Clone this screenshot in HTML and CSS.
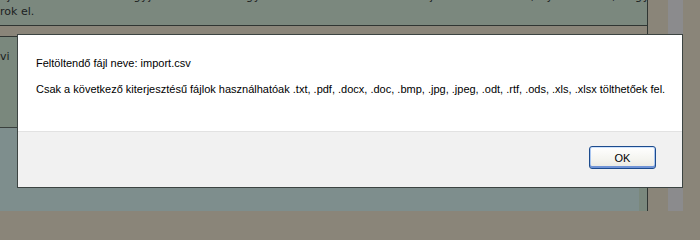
FILE: index.html
```html
<!DOCTYPE html>
<html lang="hu">
<head>
<meta charset="utf-8">
<title>Feltöltés</title>
<link rel="stylesheet" href="styles.css">
</head>
<body>
<div class="page">
  <div class="main">
    <div class="panel-top">
      <p class="bg-text first">ejtőre feltöltheted. Vagyjon kötelezettvagy önkéntes hozzászólásról sajátos feltételeire, nyilatkozom, hogy a</p>
      <p class="bg-text">rok el.</p>
    </div>
    <div class="band"></div>
    <div class="panel-mid">
      <div class="mid-inner">
        <p class="bg-text vi">vi</p>
      </div>
      <div class="mid-lower"></div>
    </div>
  </div>
  <div class="gutter"></div>
  <div class="stripe"></div>
  <div class="edge"></div>
</div>

<div class="dialog" role="dialog">
  <div class="dialog-body">
    <p>Feltöltendő fájl neve: import.csv</p>
    <p>Csak a következő kiterjesztésű fájlok használhatóak .txt, .pdf, .docx, .doc, .bmp, .jpg, .jpeg, .odt, .rtf, .ods, .xls, .xlsx tölthetőek fel.</p>
  </div>
  <div class="dialog-footer">
    <button class="ok-btn" type="button">OK</button>
  </div>
</div>
</body>
</html>
```

FILE: styles.css
```css
html, body {
  margin: 0;
  padding: 0;
}
body {
  width: 700px;
  height: 211px;
  overflow: hidden;
  background: #8a8579;
  position: relative;
  font-family: "Liberation Sans", Arial, sans-serif;
}
.page {
  display: flex;
  height: 211px;
}
.main {
  width: 647px;
  border-right: 1px solid #2f3532;
  display: flex;
  flex-direction: column;
}
.gutter {
  width: 20px;
  background: #8a8579;
}
.stripe {
  width: 15px;
  background: #8b8b8d;
}
.edge {
  flex: 1;
  background: #8a8579;
}
.panel-top {
  height: 25px;
  background: #7b887e;
  border-bottom: 1px solid #2f3532;
  overflow: hidden;
}
.bg-text {
  margin: 0;
  font-family: "DejaVu Sans", Verdana, sans-serif;
  font-size: 11px;
  line-height: 14px;
  color: #1b211e;
  white-space: nowrap;
}
.bg-text.first {
  margin-top: -10px;
  margin-bottom: 1px;
  letter-spacing: 0.6px;
}
.band {
  height: 10px;
  background: #8a8579;
}
.panel-mid {
  flex: 1;
  border-top: 1px solid #2f3532;
  background: #7a887d;
  display: flex;
  flex-direction: column;
}
.mid-inner {
  height: 90px;
  border-bottom: 1px solid #3a403d;
}
.vi {
  padding-top: 13px;
  padding-left: 0;
}
.mid-lower {
  flex: 1;
  width: 639px;
  background: #7e8e8d;
}

.dialog {
  position: absolute;
  left: 17px;
  top: 34px;
  width: 664px;
  height: 152px;
  border: 1px solid #3c4442;
  background: #ffffff;
  display: flex;
  flex-direction: column;
}
.dialog-body {
  height: 96px;
  padding: 21px 18px 0 18px;
  box-sizing: border-box;
}
.dialog-body p {
  margin: 0 0 12px 0;
  font-size: 11px;
  line-height: 14px;
  color: #000;
  white-space: nowrap;
}
.dialog-footer {
  flex: 1;
  background: #f1f1f1;
  border-top: 1px solid #e2e2e2;
  display: flex;
  justify-content: flex-end;
  align-items: flex-start;
  padding: 14px 26px 0 0;
}
.ok-btn {
  width: 67px;
  height: 23px;
  border: 1px solid #1c4b8d;
  border-radius: 3px;
  background: linear-gradient(#ffffff, #f4f4ef 60%, #e9e8e1);
  box-shadow: inset 0 1px 0 #cfe2fb, inset 0 -2px 0 #6f93d6, inset 1px 0 0 #a9c6f0, inset -1px 0 0 #a9c6f0;
  font-family: "Liberation Sans", Arial, sans-serif;
  font-size: 11px;
  color: #000;
  padding: 0;
}
```
